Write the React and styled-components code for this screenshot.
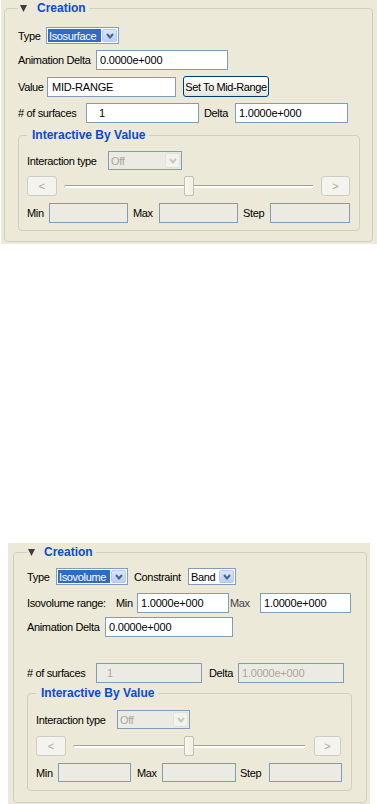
import React from 'react'
import styled, { createGlobalStyle } from 'styled-components'

const GlobalStyle = createGlobalStyle`
  body {
    margin: 0;
    background: #ffffff;
    font-family: "Liberation Sans", Arial, sans-serif;
    font-size: 11px;
    letter-spacing: -0.35px;
    color: #000000;
  }
`

const Page = styled.div`
  display: flex;
  flex-direction: column;
  align-items: flex-start;
`

const Panel = styled.div`
  background: #ECE9D8;
  box-sizing: border-box;
  width: ${p => p.$w}px;
  margin-left: ${p => p.$left}px;
  margin-top: ${p => p.$top || 0}px;
  padding: ${p => p.$pad};
`

const Group = styled.fieldset`
  margin: 0;
  border: 1px solid #D0D0BF;
  border-radius: 4px;
  padding: ${p => p.$pad};
  margin-top: ${p => p.$mt || 0}px;
  min-width: 0;
  display: flex;
  flex-direction: column;
`

const Legend = styled.legend`
  padding: ${p => p.$pad};
  line-height: ${p => p.$lh}px;
  font-size: 12px;
  font-weight: bold;
  letter-spacing: 0;
  color: #0A4BD3;
  display: flex;
  align-items: center;
  gap: ${p => p.$gap || 0}px;
  white-space: nowrap;
`

const Row = styled.div`
  display: flex;
  align-items: center;
  height: ${p => p.$h}px;
  margin-top: ${p => p.$mt || 0}px;
`

const Label = styled.span`
  flex: none;
  width: ${p => p.$w}px;
  margin-left: ${p => p.$ml || 0}px;
  white-space: nowrap;
  overflow: visible;
  color: ${p => (p.$soft ? '#444444' : '#000000')};
`

const Field = styled.input`
  flex: none;
  box-sizing: border-box;
  width: ${p => p.$w}px;
  height: ${p => p.$h || 20}px;
  margin: 0;
  border: 1px solid #7F9DB9;
  border-radius: 0;
  padding: 0 0 0 ${p => p.$indent || 3}px;
  font-family: inherit;
  font-size: 11px;
  letter-spacing: -0.2px;
  outline: none;
  background: ${p => (p.disabled ? '#EBEBE4' : '#ffffff')};
  color: ${p => (p.disabled ? '#ACA899' : '#000000')};
`

const SelectBox = styled.div`
  flex: none;
  box-sizing: border-box;
  display: flex;
  width: ${p => p.$w}px;
  height: ${p => p.$h}px;
  border: 1px solid #7F9DB9;
  padding: 1px;
  gap: 1px;
  background: ${p => (p.$disabled ? '#EBEBE4' : '#ffffff')};
`

const SelectValue = styled.span`
  flex: 1;
  display: flex;
  align-items: center;
  padding-left: 1px;
  white-space: nowrap;
  overflow: hidden;
  background: ${p => (p.$active ? '#316AC5' : 'transparent')};
  color: ${p => (p.$active ? '#ffffff' : p.$disabled ? '#ACA899' : '#000000')};
`

const DropButton = styled.span`
  flex: none;
  width: 15px;
  box-sizing: border-box;
  display: flex;
  align-items: center;
  justify-content: center;
  border-radius: 2px;
  border: 1px solid ${p => (p.$disabled ? '#E4E2D8' : '#B4C8F6')};
  background: ${p => (p.$disabled ? '#F3F2EC' : 'linear-gradient(#DCE6FE, #B9CEFA)')};
`

const PushButton = styled.button`
  flex: none;
  box-sizing: border-box;
  width: ${p => p.$w}px;
  height: ${p => p.$h || 21}px;
  margin: 0 0 0 ${p => p.$ml || 0}px;
  padding: 0;
  border: 1px solid #003C74;
  border-radius: 3px;
  background: linear-gradient(#FFFFFF, #F0F0EA 70%, #E3E2DA);
  font-family: inherit;
  font-size: 11px;
  letter-spacing: -0.4px;
  color: #000000;
  white-space: nowrap;
`

const StepButton = styled.button`
  flex: none;
  box-sizing: border-box;
  width: ${p => p.$w}px;
  height: 20px;
  margin: 0;
  padding: 0;
  border: 1px solid #CFCDC1;
  border-radius: 3px;
  background: #F4F3EE;
  font-family: inherit;
  font-size: 11px;
  color: #ACA899;
`

const Track = styled.div`
  flex: 1;
  position: relative;
  height: 20px;
  margin: 0 ${p => p.$mr}px 0 7px;
  display: flex;
  align-items: center;
`

const Rail = styled.div`
  flex: 1;
  height: 2px;
  border-top: 1px solid #A3A19B;
  border-left: 1px solid #C8C6BC;
  border-radius: 2px 0 0 2px;
  background: #FFFFFF;
`

const Thumb = styled.div`
  position: absolute;
  top: 0;
  width: 10px;
  height: 20px;
  box-sizing: border-box;
  border: 1px solid #C3C0B2;
  border-radius: 2px;
  background: linear-gradient(90deg, #F7F6F1, #EEEDE6);
`

const Tail = styled.span`
  flex: none;
  width: ${p => p.$w}px;
`

const Caret = () => (
  <svg width="7" height="7" viewBox="0 0 7 7">
    <polygon points="0,0 7,0 3.5,7" fill="#3E3E3E" />
  </svg>
)

const Chevron = ({ disabled }) => (
  <svg width="8" height="6" viewBox="0 0 8 6">
    <polyline points="1,1 4,4.5 7,1" fill="none" stroke={disabled ? '#C9C7BA' : '#4D6185'} strokeWidth="2" />
  </svg>
)

function Select({ w, h, value, active, disabled }) {
  return (
    <SelectBox $w={w} $h={h} $disabled={disabled}>
      <SelectValue $active={active} $disabled={disabled}>{value}</SelectValue>
      <DropButton $disabled={disabled}><Chevron disabled={disabled} /></DropButton>
    </SelectBox>
  )
}

function Slider({ lw, rw, mr, tail, value }) {
  return (
    <>
      <StepButton $w={lw}>&lt;</StepButton>
      <Track $mr={mr}>
        <Rail />
        <Thumb style={{ left: `calc(${value}% - 5px)` }} />
      </Track>
      <StepButton $w={rw}>&gt;</StepButton>
      <Tail $w={tail} />
    </>
  )
}

function IsosurfacePanel() {
  return (
    <Panel $w={376} $left={1} $pad="0 4px 2px 3px">
      <Group $pad="11px 12px 10px 13px">
        <Legend $pad="0 3px 0 2px" $lh={16} $gap={10}><Caret />Creation</Legend>
        <Row $h={17}>
          <Label $w={28}>Type</Label>
          <Select w={73} h={17} value="Isosurface" active />
        </Row>
        <Row $h={20} $mt={6}>
          <Label $w={78}>Animation Delta</Label>
          <Field $w={132} readOnly value="0.0000e+000" />
        </Row>
        <Row $h={21} $mt={6}>
          <Label $w={29}>Value</Label>
          <Field $w={129} readOnly value="MID-RANGE" $indent={4} />
          <PushButton $w={86} $ml={7}>Set To Mid-Range</PushButton>
        </Row>
        <Row $h={20} $mt={6}>
          <Label $w={68}># of surfaces</Label>
          <Field $w={113} readOnly value="1" $indent={12} />
          <Label $w={31} $ml={5}>Delta</Label>
          <Field $w={113} readOnly value="1.0000e+000" />
        </Row>
        <Group $mt={5} $pad="9px 7px 7px 8px">
          <Legend $pad="0 4px 0 5px" $lh={14}>Interactive By Value</Legend>
          <Row $h={19}>
            <Label $w={81}>Interaction type</Label>
            <Select w={74} h={19} value="Off" disabled />
          </Row>
          <Row $h={20} $mt={6}>
            <Slider lw={30} rw={29} mr={8} tail={2} value={50} />
          </Row>
          <Row $h={20} $mt={7}>
            <Label $w={22}>Min</Label>
            <Field $w={79} disabled value="" />
            <Label $w={26} $ml={5}>Max</Label>
            <Field $w={79} disabled value="" />
            <Label $w={27} $ml={5}>Step</Label>
            <Field $w={80} disabled value="" />
          </Row>
        </Group>
      </Group>
    </Panel>
  )
}

function IsovolumePanel() {
  return (
    <Panel $w={362} $left={8} $top={299} $pad="1px 3px 1px 5px">
      <Group $pad="8px 14px 11px 13px">
        <Legend $pad="0 3px 0 1px" $lh={16} $gap={9}><Caret />Creation</Legend>
        <Row $h={17}>
          <Label $w={29}>Type</Label>
          <Select w={72} h={17} value="Isovolume" active />
          <Label $w={54} $ml={6}>Constraint</Label>
          <Select w={48} h={17} value="Band" />
        </Row>
        <Row $h={20} $mt={8}>
          <Label $w={89}>Isovolume range:</Label>
          <Label $w={21}>Min</Label>
          <Field $w={92} readOnly value="1.0000e+000" />
          <Label $w={30} $ml={1} $soft>Max</Label>
          <Field $w={91} readOnly value="1.0000e+000" />
        </Row>
        <Row $h={20} $mt={4}>
          <Label $w={78}>Animation Delta</Label>
          <Field $w={128} readOnly value="0.0000e+000" />
        </Row>
        <Row $h={20} $mt={26}>
          <Label $w={69}># of surfaces</Label>
          <Field $w={106} disabled value="1" $indent={10} />
          <Label $w={29} $ml={7}>Delta</Label>
          <Field $w={106} disabled value="1.0000e+000" />
        </Row>
        <Group $mt={3} $pad="10px 7px 8px 8px">
          <Legend $pad="0 4px 0 5px" $lh={14}>Interactive By Value</Legend>
          <Row $h={19}>
            <Label $w={81}>Interaction type</Label>
            <Select w={73} h={19} value="Off" disabled />
          </Row>
          <Row $h={20} $mt={7}>
            <Slider lw={30} rw={27} mr={9} tail={3} value={50} />
          </Row>
          <Row $h={19} $mt={7}>
            <Label $w={22}>Min</Label>
            <Field $w={73} $h={19} disabled value="" />
            <Label $w={25} $ml={6}>Max</Label>
            <Field $w={74} $h={19} disabled value="" />
            <Label $w={29} $ml={4}>Step</Label>
            <Field $w={73} $h={19} disabled value="" />
          </Row>
        </Group>
      </Group>
    </Panel>
  )
}

export default function App() {
  return (
    <Page>
      <GlobalStyle />
      <IsosurfacePanel />
      <IsovolumePanel />
    </Page>
  )
}
